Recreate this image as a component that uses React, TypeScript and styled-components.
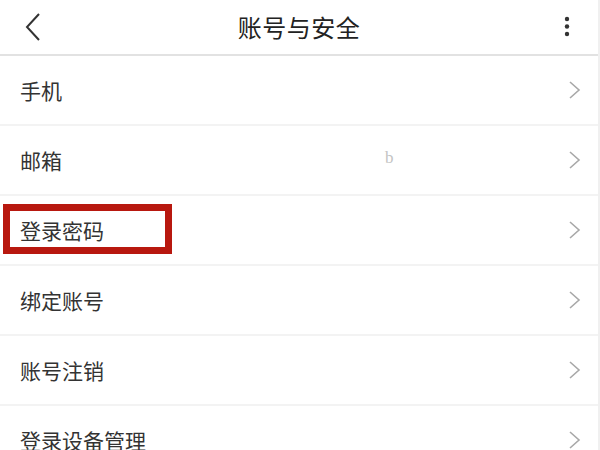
import React from "react";
import styled, { createGlobalStyle } from "styled-components";

const GlobalStyle = createGlobalStyle`
  html, body { margin: 0; padding: 0; background: #fff; }
  body { font-family: "Noto Sans CJK SC", "Noto Sans", sans-serif; }
`;

const Page = styled.div`
  width: 600px;
  height: 450px;
  overflow: hidden;
  background: #fff;
  box-sizing: border-box;
  border-right: 2px solid #f0f0f0;
`;

const Header = styled.header`
  height: 54px;
  border-bottom: 2px solid #e2e2e2;
  display: grid;
  grid-template-columns: 60px 1fr 60px;
  align-items: center;
`;

const IconButton = styled.div<{ $align: "start" | "end" }>`
  display: flex;
  justify-content: ${(p) => (p.$align === "start" ? "flex-start" : "flex-end")};
  padding: ${(p) => (p.$align === "start" ? "0 0 0 24px" : "0 28px 0 0")};
  align-items: center;
  height: 100%;
`;

const Title = styled.h1`
  margin: 0;
  text-align: center;
  font-size: 24px;
  font-weight: 400;
  color: #222;
  line-height: 1;
  letter-spacing: 0.5px;
`;

const List = styled.ul`
  list-style: none;
  margin: 0;
  padding: 0;
`;

const Row = styled.li`
  position: relative;
  height: 68px;
  border-bottom: 2px solid #f3f3f3;
  display: flex;
  align-items: center;
  padding: 0 16px 0 20px;
`;

const Label = styled.span`
  flex: 1;
  font-size: 21px;
  color: #333;
  line-height: 1;
`;

const Value = styled.span`
  position: absolute;
  left: 385px;
  top: 22px;
  font-family: "Liberation Serif", serif;
  font-size: 17px;
  color: #c4c4c4;
`;

const Highlight = styled.div`
  position: absolute;
  left: 3px;
  top: 8px;
  width: 169px;
  height: 50px;
  box-sizing: border-box;
  border: 7px solid #b8180f;
  pointer-events: none;
`;

const Back = () => (
  <svg width="18" height="30" viewBox="0 0 18 30">
    <path d="M15 2 L3 15 L15 28" fill="none" stroke="#333" strokeWidth="2" />
  </svg>
);

const More = () => (
  <svg width="6" height="22" viewBox="0 0 6 22">
    <circle cx="3" cy="3" r="2.2" fill="#333" />
    <circle cx="3" cy="10.5" r="2.2" fill="#333" />
    <circle cx="3" cy="18" r="2.2" fill="#333" />
  </svg>
);

const Chevron = () => (
  <svg width="14" height="20" viewBox="0 0 14 20">
    <path d="M2 2 L11 10 L2 18" fill="none" stroke="#a8a8a8" strokeWidth="1.6" />
  </svg>
);

const items = [
  { label: "手机" },
  { label: "邮箱", value: "b" },
  { label: "登录密码", highlight: true },
  { label: "绑定账号" },
  { label: "账号注销" },
  { label: "登录设备管理" },
];

export default function App() {
  return (
    <>
      <GlobalStyle />
      <Page>
        <Header>
          <IconButton $align="start">
            <Back />
          </IconButton>
          <Title>账号与安全</Title>
          <IconButton $align="end">
            <More />
          </IconButton>
        </Header>
        <List>
          {items.map((it) => (
            <Row key={it.label}>
              <Label>{it.label}</Label>
              {it.value && <Value>{it.value}</Value>}
              <Chevron />
              {it.highlight && <Highlight />}
            </Row>
          ))}
        </List>
      </Page>
    </>
  );
}
